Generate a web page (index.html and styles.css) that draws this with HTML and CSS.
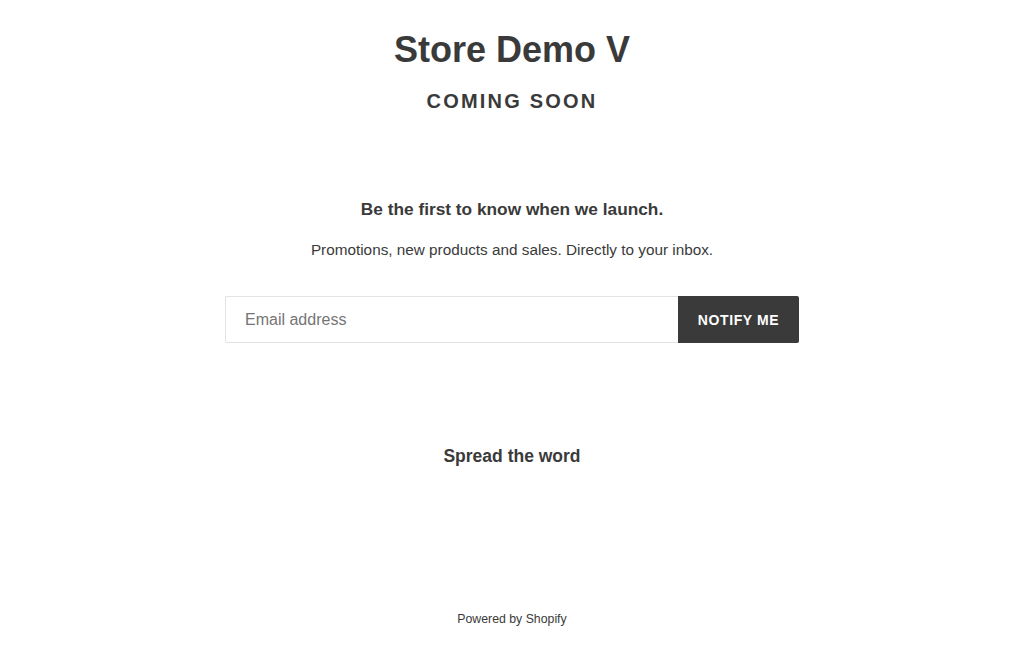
FILE: index.html
```html
<!DOCTYPE html>
<html>
<head>
<meta charset="utf-8">
<link rel="stylesheet" href="styles.css">
</head>
<body>
<div class="page">
  <header class="header">
    <h1 class="store-name">Store Demo V</h1>
    <h2 class="coming">Coming Soon</h2>
  </header>
  <section class="signup">
    <h3 class="signup-title">Be the first to know when we launch.</h3>
    <p class="signup-text">Promotions, new products and sales. Directly to your inbox.</p>
    <form class="form">
      <input class="email" type="email" placeholder="Email address">
      <button class="notify" type="button">Notify Me</button>
    </form>
  </section>
  <section class="share">
    <h3 class="share-title">Spread the word</h3>
  </section>
  <footer class="footer">Powered by Shopify</footer>
</div>
</body>
</html>
```

FILE: styles.css
```css
* { box-sizing: border-box; }
html, body { margin: 0; padding: 0; background: #fff; }
body {
  font-family: "Liberation Sans", Arial, Helvetica, sans-serif;
  color: #3a3a3a;
}
.page {
  display: flex;
  flex-direction: column;
  align-items: center;
  min-height: 657px;
}
.header { text-align: center; padding-top: 29px; }
.store-name {
  margin: 0;
  font-size: 36px;
  font-weight: 700;
  line-height: 42px;
}
.coming {
  margin: 18px 0 0;
  font-size: 20px;
  font-weight: 700;
  letter-spacing: 2.2px;
  text-transform: uppercase;
  line-height: 24px;
}
.signup { text-align: center; margin-top: 84px; }
.signup-title {
  margin: 0;
  font-size: 17.3px;
  font-weight: 700;
  line-height: 24px;
}
.signup-text {
  margin: 17px 0 0;
  font-size: 15.3px;
  line-height: 24px;
}
.form {
  display: flex;
  width: 574px;
  margin-top: 34px;
}
.email {
  flex: 1;
  height: 47px;
  border: 1px solid #e3e3e3;
  border-right: 0;
  border-radius: 2px 0 0 2px;
  padding: 0 19px;
  font-family: inherit;
  font-size: 16px;
  color: #3a3a3a;
  outline: none;
}
.email::placeholder { color: #757575; }
.notify {
  width: 121px;
  height: 47px;
  border: 0;
  border-radius: 0 2px 2px 0;
  background: #3a3a3a;
  color: #fff;
  font-family: inherit;
  font-size: 14px;
  font-weight: 700;
  letter-spacing: 0.6px;
  text-transform: uppercase;
}
.share { text-align: center; margin-top: 101px; }
.share-title {
  margin: 0;
  font-size: 17.5px;
  font-weight: 700;
  line-height: 24px;
}
.footer {
  margin-top: auto;
  padding-bottom: 31px;
  font-size: 12.3px;
  line-height: 14px;
  color: #3a3a3a;
}
```
